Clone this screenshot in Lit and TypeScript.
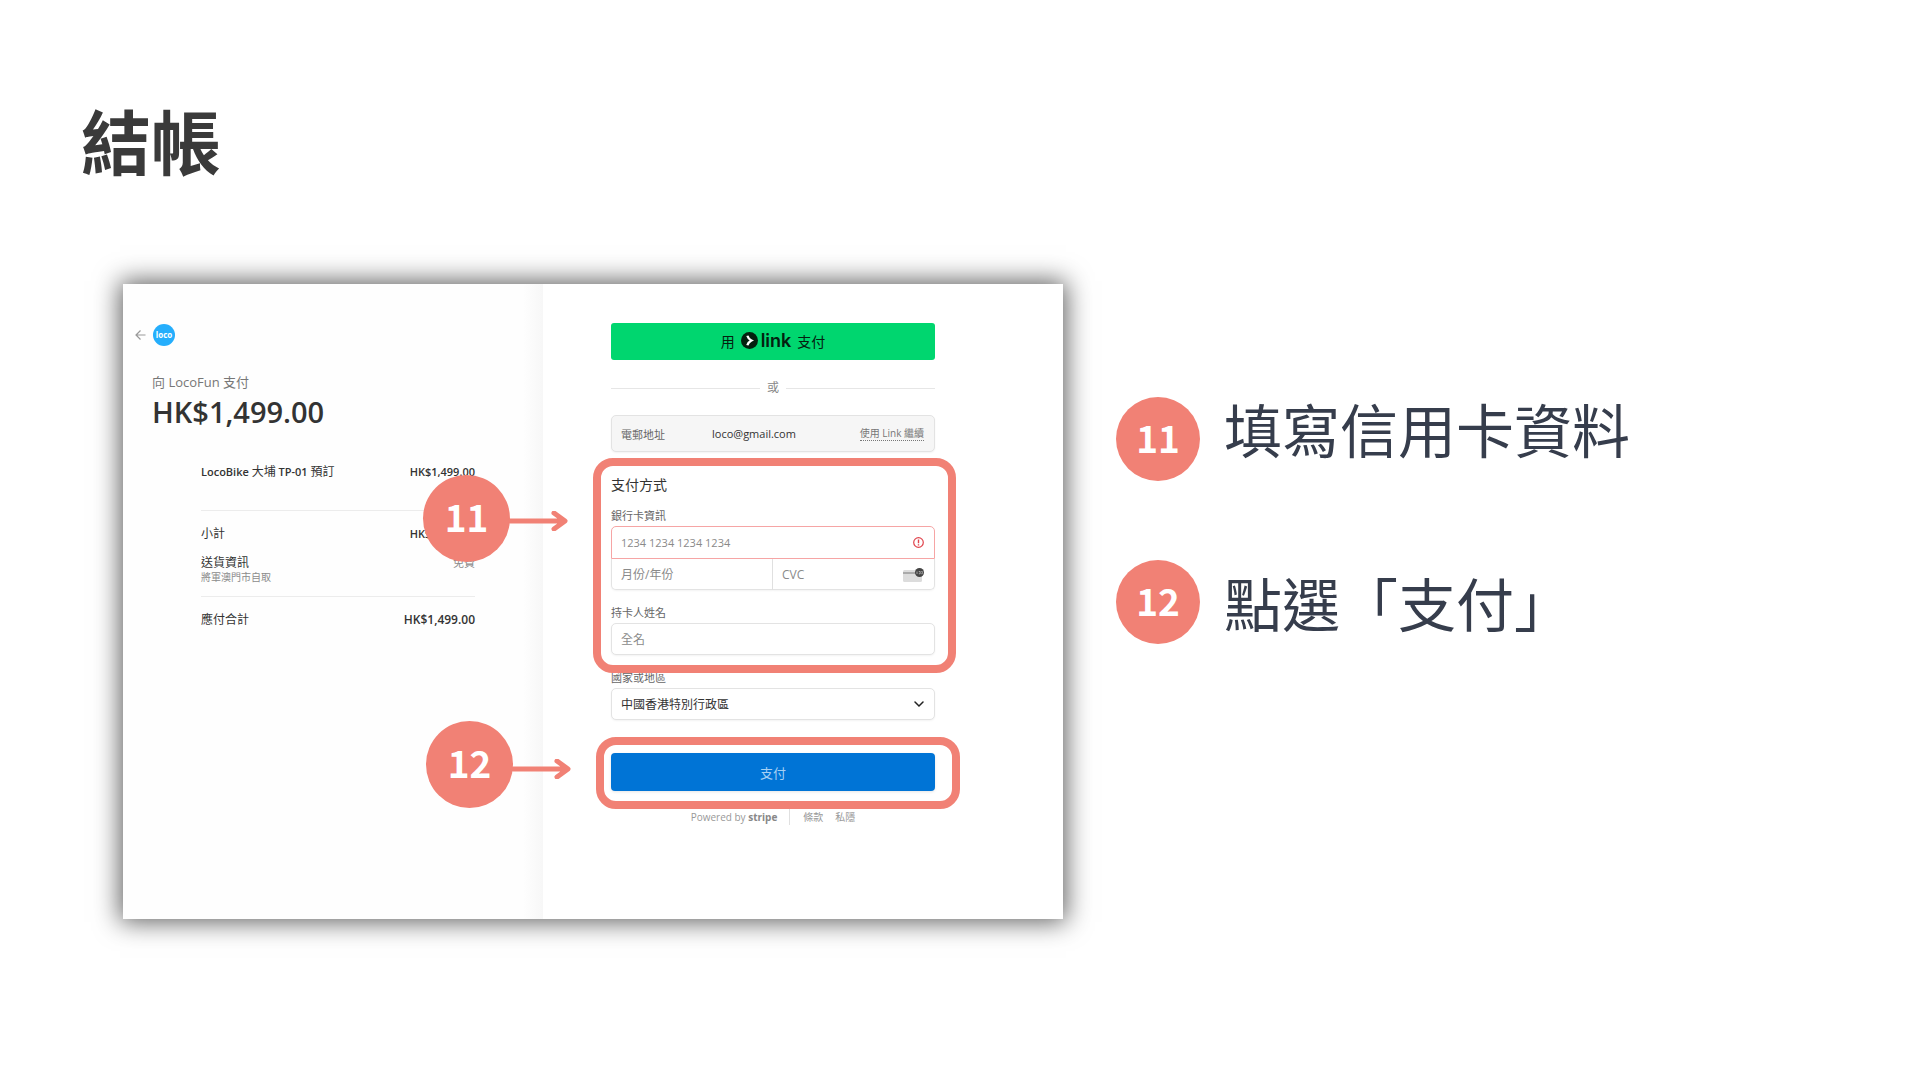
import { LitElement, html, css, svg } from "lit";
import { customElement, property } from "lit/decorators.js";

const arrow = svg`<path d="M2 10H56M46 2L57 10L46 18" fill="none" stroke="currentColor" stroke-width="5" stroke-linecap="round" stroke-linejoin="round"/>`;

@customElement("step-badge")
class StepBadge extends LitElement {
  @property() label = "";
  static styles = css`
    :host {
      display: flex;
      align-items: center;
      justify-content: center;
      box-sizing: border-box;
      width: 84px;
      height: 84px;
      padding-bottom: 5px;
      border-radius: 50%;
      background: #f18175;
      color: #fff;
      font: 700 37px/40px "Noto Sans CJK TC", sans-serif;
    }
  `;
  render() {
    return html`<span>${this.label}</span>`;
  }
}

@customElement("order-summary")
class OrderSummary extends LitElement {
  static styles = css`
    :host {
      display: block;
      padding: 40px 68px 40px 12px;
      background: linear-gradient(to left, #f7f7f7, #fefefe 20px);
      color: #333;
    }
    .top {
      display: flex;
      align-items: center;
      gap: 7px;
    }
    .back {
      display: flex;
      color: #999;
    }
    .logo {
      width: 22px;
      height: 22px;
      border-radius: 50%;
      background: #25aefc;
      color: #fff;
      font: 700 8px/21px "Open Sans", sans-serif;
      text-align: center;
    }
    .payee {
      margin: 26px 0 0 17px;
      font-size: 13px;
      line-height: 20px;
      color: #777;
    }
    .price {
      margin: 0 0 0 17px;
      font-size: 29px;
      font-weight: 600;
      line-height: 40px;
    }
    .lines {
      width: calc(100% - 66px);
      margin: 31px 0 0 66px;
      border-collapse: collapse;
      font-size: 12px;
      line-height: 18px;
    }
    th,
    td {
      padding: 0;
      text-align: left;
      vertical-align: top;
      font-weight: 400;
    }
    td {
      text-align: right;
      font-weight: 600;
      font-size: 11px;
    }
    .item th {
      font-weight: 600;
      font-size: 11px;
      padding-bottom: 29px;
    }
    .cjk {
      font-weight: 400;
      font-size: 12px;
    }
    .subtotal > * {
      padding-top: 14px;
    }
    .shipping > * {
      padding: 11px 0 13px;
    }
    .item,
    .shipping {
      border-bottom: 1px solid #ececec;
    }
    .note {
      display: block;
      font-size: 10px;
      line-height: 11px;
      color: #8c8c8c;
    }
    .free {
      color: #8c8c8c;
      font-weight: 400;
    }
    .total > * {
      padding-top: 14px;
    }
    .total td {
      font-size: 12px;
    }
  `;
  render() {
    return html`
      <div class="top">
        <a class="back" href="#" aria-label="返回">
          <svg width="11" height="12" viewBox="0 0 11 12"><path d="M10.500 6H1M5.500 1.500L1 6L5.500 10.500" fill="none" stroke="currentColor" stroke-width="1.200"/></svg>
        </a>
        <div class="logo">loco</div>
      </div>
      <p class="payee">向 LocoFun 支付</p>
      <p class="price">HK$1,499.00</p>
      <table class="lines">
        <tr class="item">
          <th scope="row">LocoBike <span class="cjk">大埔</span> TP-01 <span class="cjk">預訂</span></th>
          <td>HK$1,499.00</td>
        </tr>
        <tr class="subtotal">
          <th scope="row">小計</th>
          <td>HK$1,499.00</td>
        </tr>
        <tr class="shipping">
          <th scope="row">送貨資訊<span class="note">將軍澳門市自取</span></th>
          <td class="free">免費</td>
        </tr>
        <tr class="total">
          <th scope="row">應付合計</th>
          <td>HK$1,499.00</td>
        </tr>
      </table>
    `;
  }
}

@customElement("payment-form")
class PaymentForm extends LitElement {
  static styles = css`
    :host {
      display: block;
      padding: 39px 128px 94px 68px;
      background: #fff;
      color: #333;
    }
    * {
      box-sizing: border-box;
    }
    button,
    input,
    select {
      font-family: inherit;
      color: inherit;
      margin: 0;
    }
    .link-pay {
      display: flex;
      align-items: center;
      justify-content: center;
      gap: 6px;
      width: 100%;
      height: 37px;
      padding: 0 0 2px;
      border: 0;
      border-radius: 3px;
      background: #00d66f;
      color: #04200f;
      font-size: 14px;
    }
    .brand {
      display: flex;
      align-items: center;
      gap: 3px;
      font: 600 18px/20px Inter, sans-serif;
    }
    .or {
      display: flex;
      align-items: center;
      gap: 7px;
      margin-top: 18px;
      font-size: 12px;
      line-height: 20px;
      color: #888;
    }
    .or::before,
    .or::after {
      content: "";
      flex: 1;
      height: 1px;
      background: #e6e6e6;
    }
    .email {
      display: flex;
      align-items: center;
      height: 37px;
      margin-top: 17px;
      padding: 0 10px 0 9px;
      border: 1px solid #e3e3e3;
      border-radius: 5px;
      background: #f6f6f6;
      box-shadow: 0 1px 2px #0000000d;
      font-size: 11px;
    }
    .email label {
      width: 91px;
      color: #666;
    }
    .email input {
      flex: 1;
      min-width: 0;
      padding: 0;
      border: 0;
      background: none;
      font-size: 11px;
    }
    .email a {
      color: #777;
      font-size: 10px;
      line-height: 13px;
      text-decoration: none;
      border-bottom: 1px dotted #777;
    }
    .marked {
      position: relative;
    }
    .ring {
      position: absolute;
      border: 8px solid #f18175;
      border-radius: 20px;
      pointer-events: none;
      z-index: 1;
    }
    .ring-method {
      inset: -17px -21px -18px -18px;
    }
    .ring-pay {
      inset: -16px -25px -18px -15px;
    }
    .callout {
      position: absolute;
      display: flex;
      align-items: center;
      color: #f18175;
      z-index: 2;
    }
    .callout step-badge {
      width: 87px;
      height: 87px;
    }
    .callout svg {
      margin: 4px 0 0 -2px;
    }
    .callout-method {
      right: calc(100% + 43px);
      top: 0;
    }
    .callout-pay {
      right: calc(100% + 40px);
      top: -32px;
    }
    .callout-pay svg {
      margin-top: 8px;
    }
    .method {
      margin-top: 23px;
    }
    h2 {
      margin: 0 0 13px;
      font-size: 14px;
      font-weight: 400;
      line-height: 20px;
    }
    .label {
      display: block;
      margin-bottom: 2px;
      font-size: 11px;
      line-height: 16px;
      color: #666;
    }
    .field {
      display: block;
      width: 100%;
      height: 32px;
      padding: 0 9px;
      border: 1px solid #e3e3e3;
      border-radius: 5px;
      background: #fff;
      box-shadow: 0 1px 2px #0000000d;
      font-size: 12px;
    }
    .field::placeholder {
      color: #8a8a8a;
      opacity: 1;
    }
    .wrap {
      display: grid;
      align-items: center;
    }
    .wrap > * {
      grid-area: 1 / 1;
    }
    .wrap > svg {
      justify-self: end;
      margin-right: 11px;
    }
    .number {
      height: 33px;
      border-color: #f6a5a5;
      border-radius: 5px 5px 0 0;
      box-shadow: none;
      font-size: 11px;
    }
    .pair {
      display: grid;
      grid-template-columns: 1fr 1fr;
    }
    .pair .field {
      height: 31px;
      border-top: 0;
    }
    .expiry {
      border-radius: 0 0 0 5px;
    }
    .cvc {
      border-left: 0;
      border-radius: 0 0 5px 0;
    }
    .group {
      margin-top: 15px;
    }
    .select {
      appearance: none;
    }
    .action {
      margin-top: 33px;
    }
    .pay {
      display: block;
      width: 100%;
      height: 38px;
      padding: 0;
      border: 0;
      border-radius: 4px;
      background: #0074d6;
      box-shadow: 0 1px 3px #0000001a;
      color: #a6d0f3;
      font-size: 13px;
    }
    footer {
      display: flex;
      justify-content: center;
      gap: 12px;
      margin-top: 18px;
      font-size: 10px;
      line-height: 16px;
      color: #999;
    }
    .stripe {
      font-weight: 700;
      color: #888;
    }
    .terms {
      padding-left: 13px;
      border-left: 1px solid #e0e0e0;
    }
    footer a {
      color: inherit;
      text-decoration: none;
    }
  `;
  render() {
    return html`
      <button class="link-pay" type="button">
        <span>用</span>
        <span class="brand">
          <svg width="17" height="17" viewBox="0 0 16 16"><circle cx="8" cy="8" r="8" fill="#04200f"/><path d="M6 3.500C6.600 5.600 7.800 7 9.800 8C7.800 9 6.600 10.400 6 12.500" fill="none" stroke="#fff" stroke-width="2.200"/></svg>
          link
        </span>
        <span>支付</span>
      </button>
      <div class="or">或</div>
      <div class="email">
        <label for="email">電郵地址</label>
        <input id="email" type="email" value="loco@gmail.com" />
        <a href="#">使用 Link 繼續</a>
      </div>

      <section class="marked method">
        <h2>支付方式</h2>
        <label class="label" for="number">銀行卡資訊</label>
        <div class="wrap">
          <input class="field number" id="number" placeholder="1234 1234 1234 1234" />
          <svg width="11" height="11" viewBox="0 0 11 11"><circle cx="5.500" cy="5.500" r="4.800" fill="none" stroke="#e0444c" stroke-width="1.200"/><path d="M5.500 2.500V6.300M5.500 7.300V8.600" stroke="#e0444c" stroke-width="1.400"/></svg>
        </div>
        <div class="pair">
          <input class="field expiry" aria-label="月份/年份" placeholder="月份/年份" />
          <div class="wrap">
            <input class="field cvc" aria-label="CVC" placeholder="CVC" />
            <svg width="21" height="14" viewBox="0 0 21 14"><rect y="2" width="19" height="12" rx="1.500" fill="#dcdcdc"/><path d="M0 4H19V6H0Z" fill="#aaa"/><circle cx="16.500" cy="4.500" r="4.500" fill="#444"/><path d="M14 3.500V6M15.800 3.500H17.200V5.800H15.800M18.300 3.500H19.300V5.800H18.300" fill="none" stroke="#ccc" stroke-width=".7"/></svg>
          </div>
        </div>
        <div class="group">
          <label class="label" for="name">持卡人姓名</label>
          <input class="field" id="name" placeholder="全名" />
        </div>
        <div class="ring ring-method"></div>
        <div class="callout callout-method">
          <step-badge label="11"></step-badge>
          <svg width="60" height="20" viewBox="0 0 60 20">${arrow}</svg>
        </div>
      </section>

      <div class="group">
        <label class="label" for="country">國家或地區</label>
        <div class="wrap">
          <select class="field select" id="country">
            <option>中國香港特別行政區</option>
          </select>
          <svg width="10" height="7" viewBox="0 0 10 7"><path d="M1 1L5 5L9 1" fill="none" stroke="#222" stroke-width="1.500" stroke-linecap="round"/></svg>
        </div>
      </div>

      <div class="marked action">
        <button class="pay" type="button">支付</button>
        <div class="ring ring-pay"></div>
        <div class="callout callout-pay">
          <step-badge label="12"></step-badge>
          <svg width="60" height="20" viewBox="0 0 60 20">${arrow}</svg>
        </div>
      </div>
      <footer>
        <span>Powered by <span class="stripe">stripe</span></span>
        <a class="terms" href="#">條款</a>
        <a href="#">私隱</a>
      </footer>
    `;
  }
}

@customElement("app-root")
class AppRoot extends LitElement {
  static styles = css`
    :host {
      display: block;
      min-height: 100vh;
      box-sizing: border-box;
      padding: 98px 0 96px;
      background: #fff;
      font-family: "Open Sans", "Noto Sans CJK TC", sans-serif;
    }
    h1 {
      margin: 0 81px 102px;
      font: 700 70px/84px "Noto Sans CJK TC", sans-serif;
      color: #3a3a3a;
    }
    .content {
      display: grid;
      grid-template-columns: minmax(0, 940fr) minmax(0, 804fr);
      gap: 53px;
      padding-left: 123px;
      align-items: start;
    }
    .checkout {
      display: grid;
      grid-template-columns: minmax(0, 420fr) minmax(0, 520fr);
      box-shadow: 0 0 24px 3px #000000a0;
    }
    .steps {
      display: flex;
      gap: 24px;
      padding-top: 102px;
    }
    .badges {
      display: flex;
      flex-direction: column;
      gap: 79px;
      padding-top: 11px;
    }
    .texts {
      display: flex;
      flex-direction: column;
      gap: 90px;
      font: 400 58px/84px "Noto Sans CJK TC", sans-serif;
      color: #363d4c;
    }
    .texts p {
      margin: 0;
    }
  `;
  render() {
    return html`
      <h1>結帳</h1>
      <div class="content">
        <div class="checkout">
          <order-summary></order-summary>
          <payment-form></payment-form>
        </div>
        <div class="steps">
          <div class="badges">
            <step-badge label="11"></step-badge>
            <step-badge label="12"></step-badge>
          </div>
          <div class="texts">
            <p>填寫信用卡資料</p>
            <p>點選「支付」</p>
          </div>
        </div>
      </div>
    `;
  }
}
